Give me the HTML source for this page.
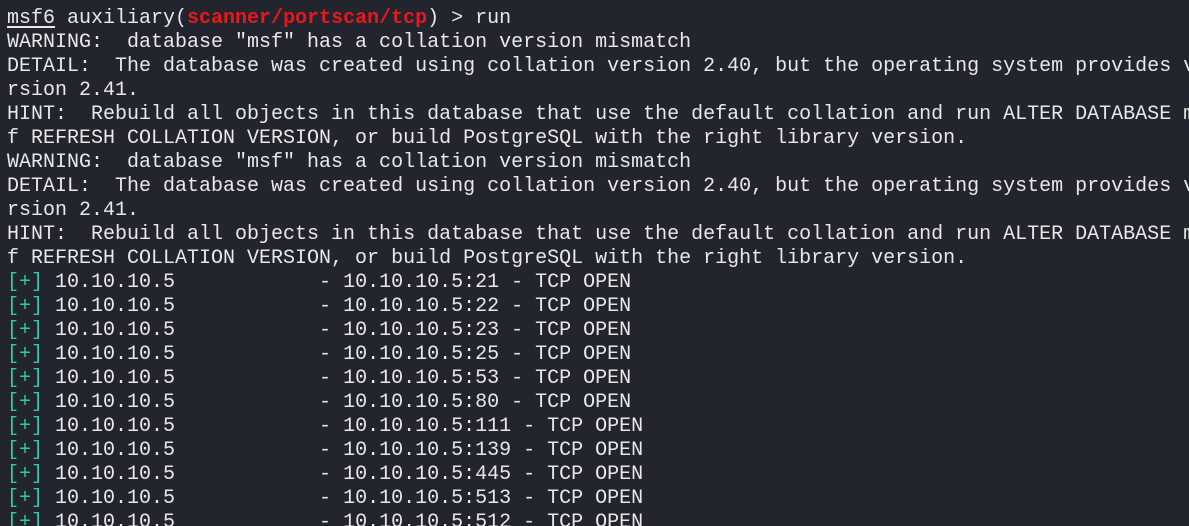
<!DOCTYPE html><html><head><style>
html,body{margin:0;background:#22252d;width:1189px;height:526px;overflow:hidden}
pre{margin:0;padding:7px 0 0 7px;font:20px/24px "Liberation Mono",monospace;color:#e8e8e8;white-space:pre}
.r{color:#e8181c;font-weight:bold}.c{color:#34c6a8}u{text-underline-offset:3px}
</style></head><body><pre><u>msf6</u> auxiliary(<span class="r">scanner/portscan/tcp</span>) &gt; run
WARNING:  database "msf" has a collation version mismatch
DETAIL:  The database was created using collation version 2.40, but the operating system provides ve
rsion 2.41.
HINT:  Rebuild all objects in this database that use the default collation and run ALTER DATABASE ms
f REFRESH COLLATION VERSION, or build PostgreSQL with the right library version.
WARNING:  database "msf" has a collation version mismatch
DETAIL:  The database was created using collation version 2.40, but the operating system provides ve
rsion 2.41.
HINT:  Rebuild all objects in this database that use the default collation and run ALTER DATABASE ms
f REFRESH COLLATION VERSION, or build PostgreSQL with the right library version.
<span class="c">[+]</span> 10.10.10.5            - 10.10.10.5:21 - TCP OPEN
<span class="c">[+]</span> 10.10.10.5            - 10.10.10.5:22 - TCP OPEN
<span class="c">[+]</span> 10.10.10.5            - 10.10.10.5:23 - TCP OPEN
<span class="c">[+]</span> 10.10.10.5            - 10.10.10.5:25 - TCP OPEN
<span class="c">[+]</span> 10.10.10.5            - 10.10.10.5:53 - TCP OPEN
<span class="c">[+]</span> 10.10.10.5            - 10.10.10.5:80 - TCP OPEN
<span class="c">[+]</span> 10.10.10.5            - 10.10.10.5:111 - TCP OPEN
<span class="c">[+]</span> 10.10.10.5            - 10.10.10.5:139 - TCP OPEN
<span class="c">[+]</span> 10.10.10.5            - 10.10.10.5:445 - TCP OPEN
<span class="c">[+]</span> 10.10.10.5            - 10.10.10.5:513 - TCP OPEN
<span class="c">[+]</span> 10.10.10.5            - 10.10.10.5:512 - TCP OPEN
</pre></body></html>
